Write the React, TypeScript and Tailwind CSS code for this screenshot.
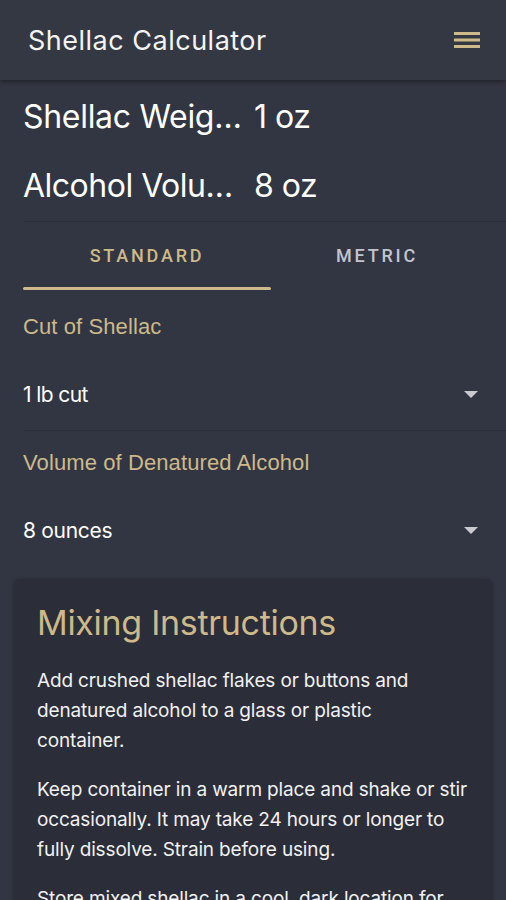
import React from "react";

const inter = { fontFamily: "Inter, 'Noto Sans', sans-serif" };

function Caret() {
  return (
    <svg width="14" height="8" viewBox="0 0 14 8" className="shrink-0">
      <path d="M0 0 L14 0 L7 7 Z" fill="#c8cad0" />
    </svg>
  );
}

function Hamburger() {
  return (
    <svg width="28" height="20" viewBox="0 0 28 20">
      <rect x="1" y="2" width="26" height="3" fill="#cdb98a" />
      <rect x="1" y="8.5" width="26" height="3" fill="#cdb98a" />
      <rect x="1" y="15" width="26" height="3" fill="#cdb98a" />
    </svg>
  );
}

export default function App() {
  return (
    <div className="w-[506px] h-[900px] overflow-hidden bg-[#323642] text-white">
      <header
        className="h-[80px] flex items-center justify-between pl-[28px] pr-[25px] bg-[#343843] shadow-[0_2px_4px_rgba(0,0,0,0.35)] relative"
        style={inter}
      >
        <span className="text-[27px] tracking-[0.5px] text-[#f3f3f3] pt-[2px]">Shellac Calculator</span>
        <Hamburger />
      </header>

      <div className="px-[23px]" style={inter}>
        <div className="h-[71px] flex items-center pt-[2px]">
          <span className="w-[222px] whitespace-nowrap text-[32px] tracking-[-0.3px] leading-none">Shellac Weig…</span>
          <span className="ml-[9px] text-[32px] tracking-[-0.5px] leading-none">1 oz</span>
        </div>
        <div className="h-[70px] flex items-center pb-[1px]">
          <span className="w-[222px] whitespace-nowrap text-[32px] tracking-[-0.5px] leading-none">Alcohol Volu…</span>
          <span className="ml-[9px] text-[32px] tracking-[-0.5px] leading-none">8 oz</span>
        </div>
      </div>
      <div className="ml-[23px] h-px bg-[#2c2f3a]" />

      <div className="px-[23px]">
        <div className="flex h-[68px]" style={{ fontFamily: "Roboto, 'Liberation Sans', sans-serif" }}>
          <div className="w-[248px] flex flex-col">
            <div className="flex-1 flex items-center justify-center text-[18px] font-medium tracking-[2.8px] text-[#cdb98a] pt-[2px]">
              STANDARD
            </div>
            <div className="h-[3px] bg-[#cdb98a] rounded-full" />
          </div>
          <div className="flex-1 flex flex-col">
            <div className="flex-1 flex items-center justify-center text-[18px] font-medium tracking-[2.8px] text-[#c3c5cc] pt-[2px]">
              METRIC
            </div>
            <div className="h-[3px]" />
          </div>
        </div>
      </div>

      <div>
        <div className="px-[23px] pt-[25px]">
          <div className="text-[22px] text-[#cdb98a] leading-[24px] tracking-[0.1px]" style={{ fontFamily: "'Liberation Sans', Arial, sans-serif" }}>
            Cut of Shellac
          </div>
          <div className="flex items-center justify-between h-[44px] mt-[34px] pr-[5px]">
            <span className="text-[21px] text-white tracking-[-0.6px]" style={inter}>1 lb cut</span>
            <Caret />
          </div>
        </div>
        <div className="ml-[23px] mt-[13px] h-px bg-[#2c2f3a]" />
        <div className="px-[23px] pt-[20px]">
          <div className="text-[22px] text-[#cdb98a] leading-[24px] tracking-[0.1px]" style={{ fontFamily: "'Liberation Sans', Arial, sans-serif" }}>
            Volume of Denatured Alcohol
          </div>
          <div className="flex items-center justify-between h-[44px] mt-[34px] pr-[5px]">
            <span className="text-[21px] text-white tracking-[-0.3px]" style={inter}>8 ounces</span>
            <Caret />
          </div>
        </div>
      </div>

      <div className="mx-[14px] mt-[26px] rounded-[6px] bg-[#2b2e39] shadow-[0_1px_4px_rgba(0,0,0,0.3)] pl-[23px] pr-[16px] pt-[22px] pb-[20px]" style={inter}>
        <h2 className="text-[34px] leading-[44px] text-[#cdb98a] tracking-[-0.3px]">Mixing Instructions</h2>
        <p className="mt-[21px] text-[19px] leading-[30px] text-[#f1f1f1] tracking-[-0.15px] whitespace-nowrap">
          Add crushed shellac flakes or buttons and
          <br />
          denatured alcohol to a glass or plastic
          <br />
          container.
        </p>
        <p className="mt-[19px] text-[19px] leading-[30px] text-[#f1f1f1] tracking-[-0.15px] whitespace-nowrap">
          Keep container in a warm place and shake or stir
          <br />
          occasionally. It may take 24 hours or longer to
          <br />
          fully dissolve. Strain before using.
        </p>
        <p className="mt-[19px] text-[19px] leading-[30px] text-[#f1f1f1] tracking-[-0.15px] whitespace-nowrap">
          Store mixed shellac in a cool, dark location for
          <br />
          up to six months.
        </p>
      </div>
    </div>
  );
}
